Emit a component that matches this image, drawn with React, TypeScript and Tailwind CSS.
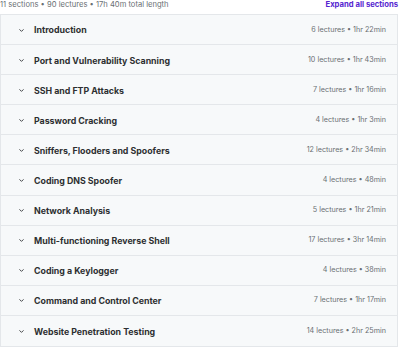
import { ChevronDown } from "lucide-react"

const sections = [
  { title: "Introduction", lectures: 6, length: "1hr 22min" },
  { title: "Port and Vulnerability Scanning", lectures: 10, length: "1hr 43min" },
  { title: "SSH and FTP Attacks", lectures: 7, length: "1hr 16min" },
  { title: "Password Cracking", lectures: 4, length: "1hr 3min" },
  { title: "Sniffers, Flooders and Spoofers", lectures: 12, length: "2hr 34min" },
  { title: "Coding DNS Spoofer", lectures: 4, length: "48min" },
  { title: "Network Analysis", lectures: 5, length: "1hr 21min" },
  { title: "Multi-functioning Reverse Shell", lectures: 17, length: "3hr 14min" },
  { title: "Coding a Keylogger", lectures: 4, length: "38min" },
  { title: "Command and Control Center", lectures: 7, length: "1hr 17min" },
  { title: "Website Penetration Testing", lectures: 14, length: "2hr 25min" },
]

export default function App() {
  return (
    <div className="h-[347px] w-[400px] overflow-hidden bg-white font-['Inter',sans-serif] text-[#2d2f31]">
      <div className="flex h-[10px] items-center justify-between pr-[2px] leading-none">
        <span className="text-[7.6px] text-[#6a6f73]">
          11 sections • 90 lectures • 17h 40m total length
        </span>
        <button className="text-[7.7px] font-bold text-[#5624d0]">Expand all sections</button>
      </div>

      <div className="mt-[4px] mr-[2px] border border-[#e4e7ea]">
        {sections.map((s, i) => (
          <div
            key={s.title}
            className={`flex h-[30.1px] items-center bg-[#f7f9fa] pt-[1px] pl-[17px] pr-[11px] ${
              i < sections.length - 1 ? "border-b border-[#e4e7ea]" : ""
            }`}
          >
            <ChevronDown className="h-[7px] w-[7px] text-[#2d2f31]" strokeWidth={3} />
            <span className="ml-[9px] flex-1 text-[8.8px] font-bold">{s.title}</span>
            <span className="text-[7.2px] text-[#6a6f73]">
              {s.lectures} lectures • {s.length}
            </span>
          </div>
        ))}
      </div>
    </div>
  )
}
